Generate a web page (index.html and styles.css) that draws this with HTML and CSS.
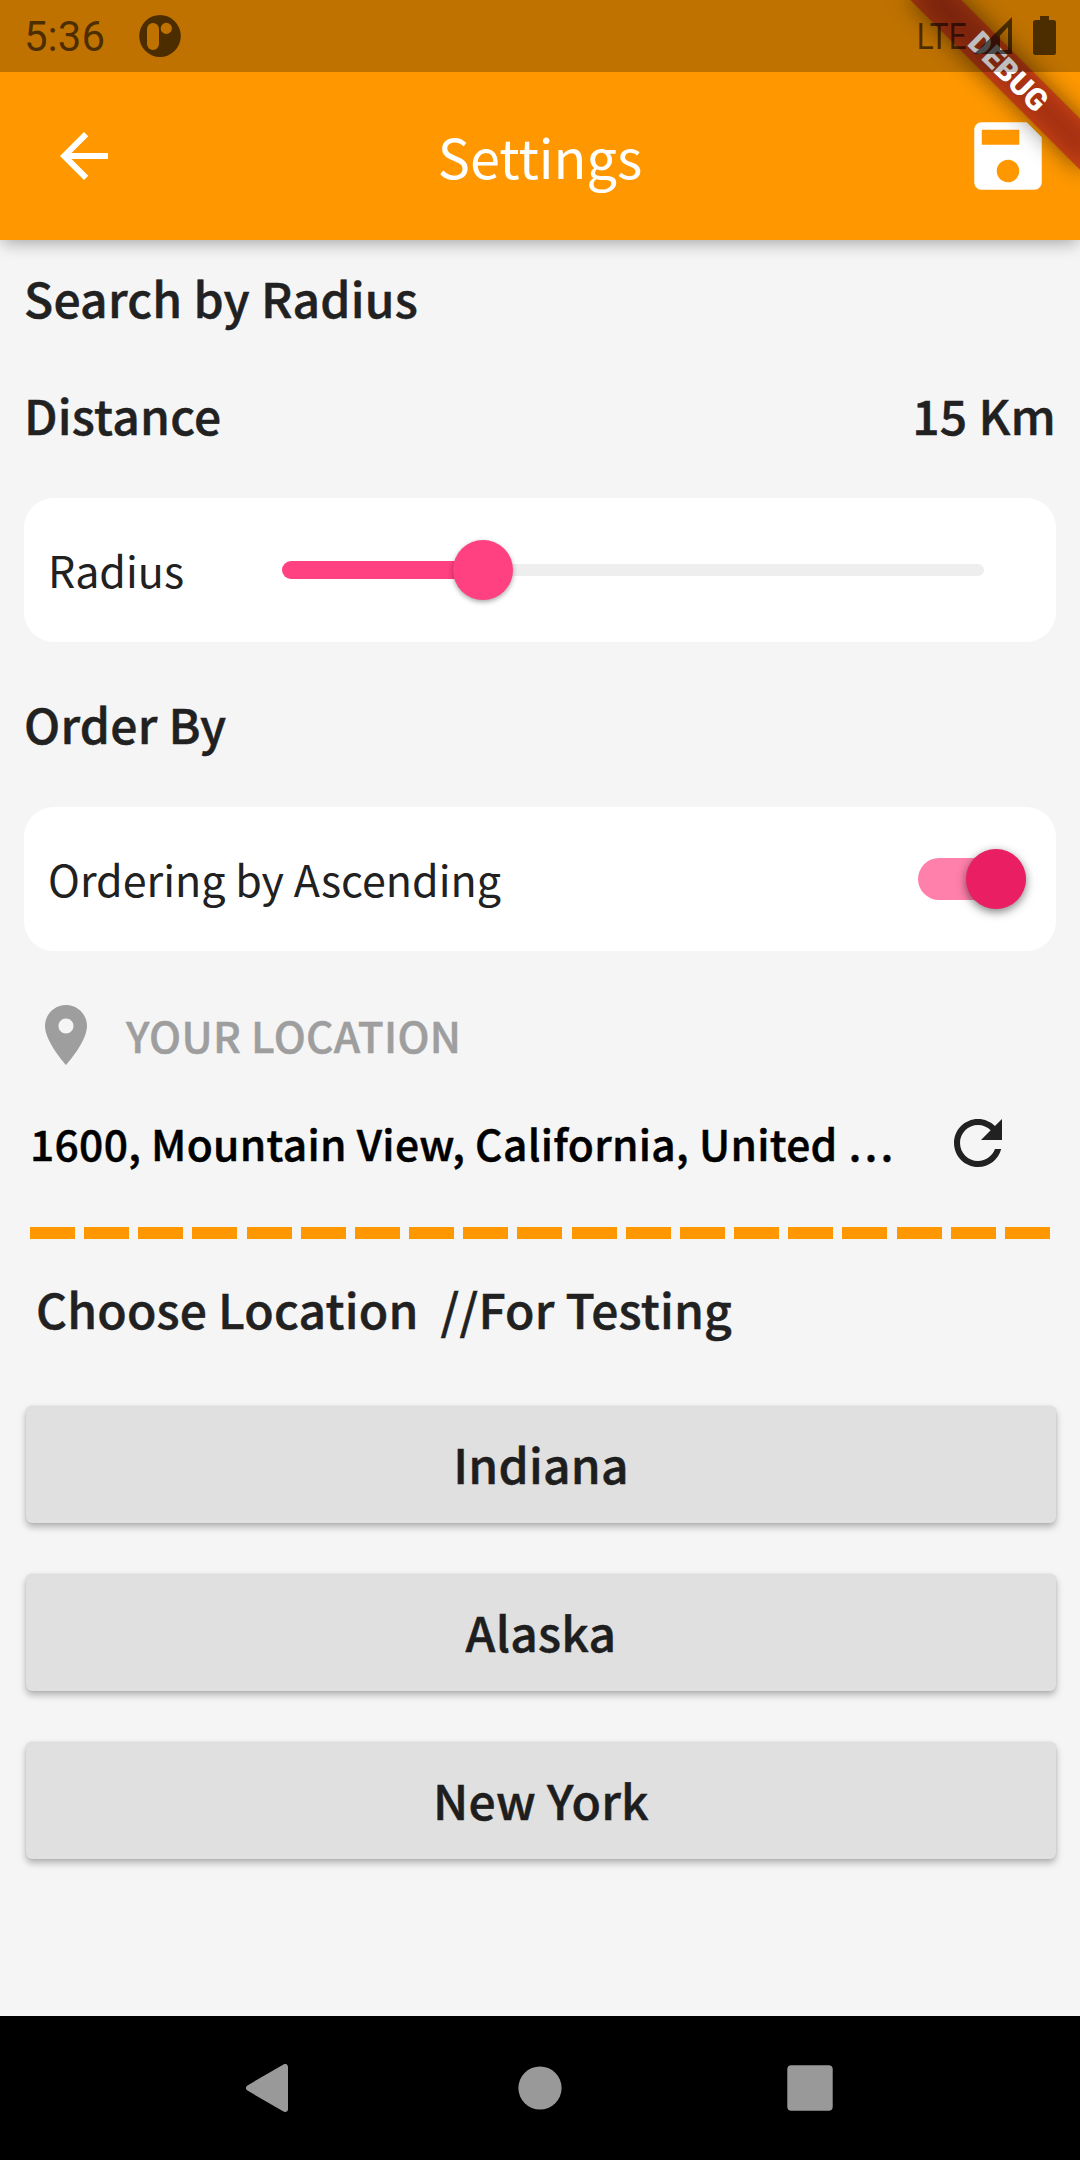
FILE: index.html
```html
<!DOCTYPE html>
<html lang="en">
<head>
<meta charset="utf-8">
<title>Settings</title>
<link rel="stylesheet" href="styles.css">
</head>
<body>
<div class="screen">
  <div class="status-bar">
    <span class="clock">5:36</span>
    <svg class="app-badge" viewBox="0 0 42 42"><path fill-rule="evenodd" d="M21 0a20.8 21 0 1 1 0 42a20.8 21 0 1 1 0-42zM14 8a6 6 0 0 0-6 6v15a6 6 0 0 0 12 0v-15a6 6 0 0 0-6-6zM27.3 7.8a5.6 5.6 0 1 0 0 11.2a5.6 5.6 0 1 0 0-11.2z"/></svg>
    <span class="network">LTE</span>
    <svg class="signal" viewBox="0 0 38 37"><path fill-rule="evenodd" d="M38 0V37H0zM34 10L26 18.500V33H34z"/></svg>
    <svg class="battery" viewBox="0 0 23 39"><path d="M7 0h9v4h4.500a2.500 2.500 0 0 1 2.500 2.500v30a2.500 2.500 0 0 1-2.500 2.500h-18a2.500 2.500 0 0 1-2.500-2.500v-30a2.500 2.500 0 0 1 2.500-2.500h4.500z"/></svg>
  </div>
  <header class="app-bar">
    <svg class="back" viewBox="0 0 24 24"><path d="M20 11H7.830l5.590-5.590L12 4l-8 8 8 8 1.410-1.410L7.830 13H20v-2z"/></svg>
    <h1 class="title">Settings</h1>
    <svg class="save" viewBox="0 0 24 24"><path d="M17 3H5c-1.110 0-2 .9-2 2v14c0 1.100.89 2 2 2h14c1.100 0 2-.9 2-2V7l-4-4zm-5 16c-1.660 0-3-1.340-3-3s1.340-3 3-3 3 1.340 3 3-1.340 3-3 3zm3-10H5V5h10v4z"/></svg>
  </header>
  <div class="debug">
    <div class="debug-turn">
      <div class="debug-shadow"></div>
      <div class="debug-band">DEBUG</div>
    </div>
  </div>
  <main class="content">
    <h2 class="heading">Search by Radius</h2>
    <div class="distance"><h2 class="heading">Distance</h2><span class="heading">15 Km</span></div>
    <section class="card">
      <span class="label">Radius</span>
      <div class="slider"><div class="slider-fill"></div><div class="slider-thumb"></div><div class="slider-rest"></div></div>
    </section>
    <h2 class="heading order">Order By</h2>
    <section class="card">
      <span class="label">Ordering by Ascending</span>
      <div class="switch"><div class="switch-thumb"></div></div>
    </section>
    <div class="place-title">
      <svg class="icon" viewBox="0 0 24 24"><path d="M12 2C8.130 2 5 5.130 5 9c0 5.250 7 13 7 13s7-7.750 7-13c0-3.870-3.130-7-7-7zm0 9.500c-1.380 0-2.500-1.120-2.500-2.500s1.120-2.500 2.500-2.500 2.500 1.120 2.500 2.500-1.120 2.500-2.500 2.500z"/></svg>
      <span class="strong">YOUR LOCATION</span>
    </div>
    <div class="place">
      <span class="address strong">1600, Mountain View, California, United …</span>
      <svg class="icon" viewBox="0 0 24 24"><path d="M17.650 6.350C16.200 4.900 14.210 4 12 4c-4.420 0-7.990 3.580-7.990 8s3.570 8 7.990 8c3.730 0 6.840-2.550 7.730-6h-2.080c-.82 2.330-3.040 4-5.650 4-3.310 0-6-2.690-6-6s2.690-6 6-6c1.660 0 3.140.69 4.220 1.780L13 11h7V4l-2.350 2.350z"/></svg>
    </div>
    <div class="dashes"><i></i><i></i><i></i><i></i><i></i><i></i><i></i><i></i><i></i><i></i><i></i><i></i><i></i><i></i><i></i><i></i><i></i><i></i><i></i></div>
    <h2 class="heading choose">Choose Location  //For Testing</h2>
    <div class="buttons">
      <button class="button">Indiana</button>
      <button class="button">Alaska</button>
      <button class="button">New York</button>
    </div>
  </main>
  <nav class="nav-bar">
    <svg viewBox="0 0 48 48"><path d="M39 3V45L3 24z" stroke-width="6" stroke-linejoin="round"/></svg>
    <svg viewBox="0 0 48 48"><circle cx="24" cy="24" r="21.600"/></svg>
    <svg viewBox="0 0 48 48"><rect x="1.300" y="1.300" width="45.400" height="45.400" rx="4"/></svg>
  </nav>
</div>
</body>
</html>
```
FILE: styles.css
```css
* { box-sizing: border-box; }
body {
  margin: 0;
  font-family: "Noto Sans CJK SC", "Noto Sans", sans-serif;
  color: #212121;
}
h1, h2 { margin: 0; font-weight: 500; }
svg { display: block; flex: none; }

.screen {
  position: relative;
  display: flex;
  flex-direction: column;
  width: 1080px;
  height: 2160px;
  overflow: hidden;
  background: #f5f5f5;
}

/* translucent scrim above the app bar colour and the debug ribbon */
.status-bar {
  position: relative;
  z-index: 3;
  display: flex;
  align-items: flex-start;
  height: 72px;
  padding: 0 24px;
  background: rgba(0, 0, 0, .25);
  color: rgba(0, 0, 0, .6);
  fill: rgba(0, 0, 0, .6);
  font-family: Roboto, sans-serif;
}
.clock { width: 115px; font-size: 42px; line-height: 74px; }
.app-badge { width: 42px; height: 42px; margin-top: 15px; }
.network {
  margin-left: auto;
  font-size: 37.500px;
  line-height: 72px;
  transform: scaleX(.85);
  transform-origin: right;
}
.signal { width: 38px; height: 37px; margin: 17px 0 0 7px; }
.battery { width: 23px; height: 39px; margin: 16px 0 0 21px; }

.app-bar {
  position: relative;
  z-index: 1;
  display: flex;
  align-items: flex-end;
  justify-content: space-between;
  height: 240px;
  margin-top: -72px;
  padding: 0 27px 0 48px;
  background: #ff9800;
  box-shadow: 0 5px 16px -2px rgba(0, 0, 0, .33);
  color: #fff;
  fill: #fff;
}
.back { width: 72px; height: 72px; margin-bottom: 48px; }
.save { width: 90px; height: 90px; margin-bottom: 39px; }
.title { margin-left: -3px; font-size: 54px; font-weight: 400; line-height: 168px; }

.debug {
  position: absolute;
  z-index: 2;
  top: 0;
  right: 0;
  width: 240px;
  height: 240px;
  overflow: hidden;
}
.debug-turn {
  position: absolute;
  top: 0;
  left: 240px;
  width: 0;
  height: 0;
  transform: rotate(45deg);
}
.debug-shadow, .debug-band {
  position: absolute;
  top: 84px;
  left: -120px;
  width: 240px;
  height: 36px;
}
.debug-shadow { background: rgba(0, 0, 0, .5); filter: blur(12px); }
.debug-band {
  background: rgba(183, 28, 28, .627);
  color: #fff;
  font: 900 30.600px/36px Roboto, sans-serif;
  text-align: center;
}

.content { flex: 1; padding: 22px 24px 0; }
.heading {
  display: block;
  font-size: 48px;
  font-weight: 500;
  line-height: 70px;
  letter-spacing: .24px;
  white-space: pre;
}
/* semi-bold weight, between the family's medium and bold */
.heading, .strong, .button { -webkit-text-stroke: .5px currentColor; }
.strong { letter-spacing: .32px; }
.distance { display: flex; justify-content: space-between; margin: 47px 0 49px; }
.order { margin: 46px 0 49px; }
.card {
  display: flex;
  align-items: center;
  justify-content: space-between;
  height: 144px;
  padding: 0 30px 0 24px;
  border-radius: 30px;
  background: #fff;
}
.label { padding-bottom: 2px; font-size: 43px; line-height: 142px; }

.slider { display: flex; align-items: center; width: 702px; margin-right: 42px; }
.slider-fill { width: 201px; height: 18px; border-radius: 9px 0 0 9px; background: #ff4081; }
.slider-thumb {
  position: relative;
  flex: none;
  width: 60px;
  height: 60px;
  margin: 0 -30px;
  border-radius: 50%;
  background: #ff4081;
  box-shadow: 0 2px 5px rgba(0, 0, 0, .35);
}
.slider-rest { flex: 1; height: 12px; border-radius: 0 6px 6px 0; background: #eee; }

.switch { display: flex; align-items: center; width: 108px; height: 42px; border-radius: 21px; background: #ff80ab; }
.switch-thumb {
  flex: none;
  width: 60px;
  height: 60px;
  margin-left: 48px;
  border-radius: 50%;
  background: #e91e63;
  box-shadow: 0 3px 10px rgba(0, 0, 0, .5);
}

.icon { width: 72px; height: 72px; }
.place-title {
  display: flex;
  gap: 24px;
  height: 72px;
  margin-top: 48px;
  padding-left: 6px;
  color: #9e9e9e;
  fill: #9e9e9e;
  font-size: 42.500px;
  font-weight: 500;
  line-height: 72px;
}
.place {
  display: flex;
  justify-content: space-between;
  height: 72px;
  margin-top: 36px;
  padding: 0 42px 0 6px;
  color: #000;
  fill: #212121;
  font-size: 42.500px;
  font-weight: 500;
  line-height: 72px;
}
.address { white-space: nowrap; }
.dashes { display: flex; justify-content: space-between; margin: 48px 6px 34px; }
.dashes i { width: 45px; height: 12px; background: #ff9800; }
.choose { padding-left: 12px; letter-spacing: .19px; }

.buttons { display: flex; flex-direction: column; gap: 51px; margin: 63px 0 0 2px; }
.button {
  height: 117px;
  padding: 0 0 4px;
  border: 0;
  border-radius: 6px;
  background: #e0e0e0;
  box-shadow: 0 4px 7px rgba(0, 0, 0, .28), 0 0 2px rgba(0, 0, 0, .12);
  color: #1e1e1e;
  font: 500 48px/70px "Noto Sans CJK SC", "Noto Sans", sans-serif;
  letter-spacing: .24px;
}

.nav-bar {
  display: flex;
  align-items: center;
  justify-content: center;
  gap: 222px;
  height: 144px;
  background: #000;
  fill: #999;
}
.nav-bar path { stroke: #999; }
.nav-bar svg { width: 48px; height: 48px; }
```
